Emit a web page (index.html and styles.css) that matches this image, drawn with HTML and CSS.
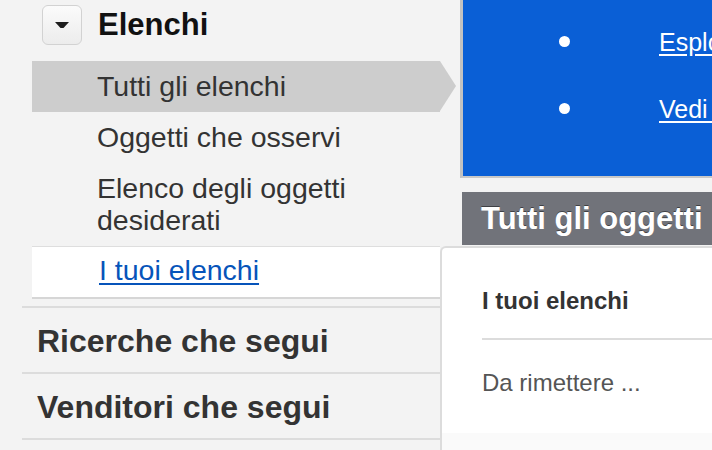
FILE: index.html
```html
<!DOCTYPE html>
<html lang="it">
<head>
<meta charset="utf-8">
<title>Elenchi</title>
<link rel="stylesheet" href="styles.css">
</head>
<body>
<div class="page">
  <aside class="sidebar">
    <section class="sec sec-open">
      <div class="sec-head">
        <button class="toggle" type="button" aria-label="Comprimi">
          <svg width="14" height="8" viewBox="0 0 14 8"><polygon points="0,0 14,0 8.5,6 5.5,6" fill="#1e1e1e"/></svg>
        </button>
        <h2 class="sec-title dark">Elenchi</h2>
      </div>
      <ul class="sub">
        <li class="sub-item active">Tutti gli elenchi</li>
        <li class="sub-item">Oggetti che osservi</li>
        <li class="sub-item">Elenco degli oggetti desiderati</li>
        <li class="sub-item current"><a href="#" class="sub-link">I tuoi elenchi</a></li>
      </ul>
    </section>
    <section class="sec"><h2 class="sec-title">Ricerche che segui</h2></section>
    <section class="sec sec-last"><h2 class="sec-title">Venditori che segui</h2></section>
  </aside>

  <main class="main">
    <div class="promo">
      <ul class="promo-list">
        <li class="promo-item"><span class="dot"></span><a href="#" class="promo-link">Esplora le novità</a></li>
        <li class="promo-item"><span class="dot"></span><a href="#" class="promo-link">Vedi tutti</a></li>
      </ul>
    </div>
    <h1 class="main-head">Tutti gli oggetti</h1>
  </main>

  <div class="flyout">
    <div class="fly-body">
      <h3 class="fly-title">I tuoi elenchi</h3>
      <p class="fly-text">Da rimettere ...</p>
    </div>
    <div class="fly-foot"></div>
  </div>
</div>
</body>
</html>
```

FILE: styles.css
```css
* { box-sizing: border-box; }

html, body {
  margin: 0;
  padding: 0;
  width: 712px;
  height: 450px;
  overflow: hidden;
}

body {
  background: #f3f3f3;
  font-family: "Liberation Sans", Arial, Helvetica, sans-serif;
  color: #333;
}

.page {
  position: relative;
  display: grid;
  grid-template-columns: 440px 1fr;
  column-gap: 20px;
  width: 712px;
  height: 450px;
}

/* ---------- sidebar ---------- */
.sidebar {
  display: flex;
  flex-direction: column;
}

.sec {
  margin-left: 22px;
  border-top: 2px solid #dcdcdc;
  padding: 15px 0 13px 15px;
}

.sec-open {
  border-top: none;
  padding: 5px 0 7px 0;
}

.sec-last {
  border-bottom: 2px solid #dcdcdc;
}

.sec-head {
  display: flex;
  align-items: center;
  gap: 16px;
  padding-left: 20px;
  height: 40px;
}

.toggle {
  width: 40px;
  height: 40px;
  padding: 0;
  margin: 0;
  border: 1px solid #d2d2d2;
  border-radius: 6px;
  background: linear-gradient(#fbfbfb, #ececec);
  display: flex;
  align-items: center;
  justify-content: center;
}

.toggle svg { display: block; margin-top: 2px; }

.sec-title {
  margin: 0;
  font-size: 32px;
  line-height: 36px;
  font-weight: bold;
  color: #333;
  white-space: nowrap;
}

.sec-title.dark { color: #111; font-size: 31px; }

.sub {
  list-style: none;
  margin: 16px 0 0 10px;
  padding: 0;
}

.sub-item {
  position: relative;
  padding: 9px 20px 10px 65px;
  font-size: 28.5px;
  line-height: 32px;
  color: #333;
}

.sub-item.active {
  background: #cdcdcd;
}

.sub-item.active::after {
  content: "";
  position: absolute;
  left: 100%;
  top: 0;
  border-left: 16px solid #cdcdcd;
  border-top: 25.5px solid transparent;
  border-bottom: 25.5px solid transparent;
}

.sub-item.current {
  background: #fff;
  border-top: 1px solid #dedede;
  border-bottom: 2px solid #d6d6d6;
  padding: 7px 20px 11px 67px;
}

.sub-link {
  color: #0654ba;
  text-decoration: underline;
  text-underline-offset: 3px;
}

/* ---------- main ---------- */
.main {
  display: flex;
  flex-direction: column;
  min-width: 0;
}

.promo {
  background: #0a5fd6;
  border-left: 3px solid #c2c2c2;
  border-bottom: 2px solid #c8c8c8;
  height: 178px;
  padding: 27px 0 0 96px;
}

.promo-list {
  list-style: none;
  margin: 0;
  padding: 0;
  display: flex;
  flex-direction: column;
  gap: 37px;
}

.promo-item {
  display: flex;
  align-items: center;
  gap: 89px;
  height: 30px;
  white-space: nowrap;
}

.dot {
  flex: none;
  width: 11px;
  height: 11px;
  border-radius: 50%;
  background: #fff;
  margin-top: -2px;
}

.promo-link {
  color: #fff;
  font-size: 25px;
  line-height: 30px;
  text-decoration: underline;
  text-underline-offset: 3px;
}

.main-head {
  margin: 14px 0 0 2px;
  height: 53px;
  background: #71737a;
  color: #fff;
  font-size: 31px;
  line-height: 53px;
  font-weight: bold;
  padding-left: 19px;
  white-space: nowrap;
  text-shadow: 0 -1px 0 rgba(0,0,0,0.45);
}

/* ---------- flyout ---------- */
.flyout {
  position: absolute;
  left: 440px;
  top: 246px;
  width: 272px;
  height: 204px;
  background: #fff;
  border: 2px solid #dcdcdc;
  border-right: none;
  border-bottom: none;
  border-radius: 6px 0 0 0;
  display: flex;
  flex-direction: column;
}

.fly-body {
  padding: 39px 0 0 40px;
  height: 185px;
}

.fly-title {
  margin: 0;
  font-size: 24px;
  line-height: 28px;
  font-weight: bold;
  color: #333;
  padding-bottom: 23px;
  border-bottom: 2px solid #dcdcdc;
  white-space: nowrap;
}

.fly-text {
  margin: 29px 0 0 0;
  font-size: 24px;
  line-height: 28px;
  color: #555;
  white-space: nowrap;
}

.fly-foot {
  flex: 1;
  background: #fafafa;
}
```
